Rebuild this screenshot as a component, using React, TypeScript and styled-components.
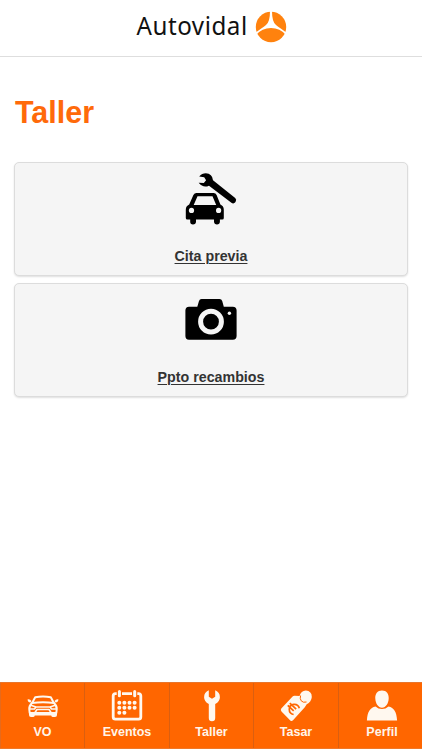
import React from 'react';
import styled, { createGlobalStyle } from 'styled-components';

const Global = createGlobalStyle`
  * { box-sizing: border-box; }
  body { margin: 0; background: #fff; font-family: "Liberation Sans", Arial, sans-serif; }
`;

const Screen = styled.div`
  height: 750px;
  display: flex;
  flex-direction: column;
  background: #fff;
  overflow: hidden;
`;

const Header = styled.header`
  height: 57px;
  flex: none;
  display: flex;
  justify-content: center;
  border-bottom: 1px solid #dedede;
`;

const Logo = styled.svg`
  width: 160px;
  height: 50px;
  display: block;
`;

const Main = styled.main`
  flex: 1;
  padding: 0 14px;
`;

const Title = styled.h1`
  margin: 38px 0 32px 1px;
  height: 35px;
  line-height: 35px;
  font-size: 30.5px;
  color: #ff6a0a;
`;

const Card = styled.a`
  height: 114px;
  margin-bottom: 7px;
  padding-top: 10px;
  display: flex;
  flex-direction: column;
  align-items: center;
  background: #f5f5f5;
  border: 1px solid #dcdcdc;
  border-radius: 5px;
  box-shadow: 0 1px 2px rgba(0, 0, 0, 0.13);
`;

const CardIcon = styled.svg`
  width: 52px;
  height: 52px;
  display: block;
  flex: none;
`;

const CardLabel = styled.span`
  margin-top: 22px;
  font-size: 14.25px;
  line-height: 18px;
  font-weight: bold;
  color: #333;
  text-decoration: underline;
  text-decoration-thickness: 1px;
  text-underline-offset: 2px;
`;

const TabBar = styled.nav`
  height: 67px;
  flex: none;
  margin-bottom: 1px;
  display: grid;
  grid-template-columns: 85px 85px 84px 85px 83px;
  background: #ff6600;
  border-top: 1px solid #e8752b;
  border-bottom: 1px solid #f07828;
`;

const Tab = styled.a`
  display: flex;
  flex-direction: column;
  align-items: center;
  padding-top: 6px;
  border-right: 1px solid #da5f10;
  &:first-child { border-left: 1px solid #e66a1c; }
  &:last-child { border-right: 0; padding-left: 3px; }
`;

const TabIcon = styled.svg`
  width: 34px;
  height: 34px;
  display: block;
`;

const TabLabel = styled.span`
  margin-top: 1px;
  font-size: 12.5px;
  line-height: 16px;
  font-weight: bold;
  color: #fff5ea;
`;

const Brand = () => (
  <Logo viewBox="131 0 160 50" role="img" aria-label="Autovidal">
    <text transform="translate(136.5 34.8) scale(.93 1)" fontFamily='"Noto Sans", sans-serif' fontSize="26" textLength="119" fill="#111">Autovidal</text>
    <circle cx="271" cy="27" r="15.2" fill="#ff820e" />
    <path d="M270 11h2Q272 22 276 25T287 33L286 35Q280 28 271 28T256 35L255 33Q262 28 266 25T270 11Z" fill="#fff" />
  </Logo>
);

const CarService = () => (
  <CardIcon viewBox="0 0 52 52">
    <path d="M14.2 3.6Q17 .3 20.8.3Q27.3.6 28 7.2L50.2 25.1Q52 26.8 50.5 29Q48.8 31.3 46.4 29.8L24 12.7Q18.2 15.5 13.7 9.8L18.8 10.1L21.1 7.2L19.2 4.2Z" />
    <path fillRule="evenodd" d="M11.5 19.9H28.5Q30.8 19.9 31.6 22L35.4 31.5Q38.8 33 38.8 36.8V45Q38.8 46.5 37.3 46.5H34.9V48.8Q34.7 51.4 32 51.4T29 48.8V46.5H11V48.8Q10.8 51.4 8 51.4T5.2 48.8V46.5H2.3Q.8 46.5.8 45V36.8Q.8 33 4.2 31.5L8.4 22Q9.4 19.9 11.5 19.9ZM12.5 23.2L8.7 32H31.2L27.5 23.2Z" />
    <circle cx="6.5" cy="37.4" r="2.6" fill="#f5f5f5" />
    <circle cx="33.6" cy="37.4" r="2.6" fill="#f5f5f5" />
  </CardIcon>
);

const Camera = () => (
  <CardIcon viewBox="0 -5 52 52">
    <path d="M4 7.7H12.3L14 2Q14.6 0 16.5 0H34.5Q36.6 0 37.2 2L38.8 7.7H47.8Q51.6 7.7 51.6 11.5V37Q51.6 40.7 47.8 40.7H4Q.4 40.7.4 37V11.5Q.4 7.7 4 7.7Z" />
    <circle cx="26" cy="22.7" r="10.4" fill="none" stroke="#f5f5f5" strokeWidth="5" />
    <circle cx="44.4" cy="14.3" r="1.7" fill="#f5f5f5" />
  </CardIcon>
);

const cream = '#fff8ef';

const Car = () => (
  <TabIcon viewBox="0 0 34 34">
    <g fill="none" stroke={cream} strokeWidth="2" strokeLinejoin="round">
      <path d="M6 14.3L9.2 8.2Q17 6.8 24.8 8.2L28 14.3" />
      <path d="M6 14Q17 12.6 28 14Q31.2 17 30.7 20.5L30.3 24H3.7L3.3 20.5Q2.8 17 6 14Z" />
      <path d="M4 16L10 18L8.5 20H3.5M30 16L24 18L25.5 20H30.5M10 18H24M9 23.5L11 20.5H23L25 23.5" strokeWidth="1.6" />
    </g>
    <path d="M1.5 10.5Q3.7 9.7 5.5 12L4.5 13.4Q2 13.6 1.5 10.5ZM32.5 10.5Q30.3 9.7 28.5 12L29.5 13.4Q32 13.6 32.5 10.5ZM3 23H9L9.4 24.5H24.6L25 23H31V26Q31 28 29 28H27Q25.5 28 25.2 26.5H8.8Q8.5 28 7 28H5Q3 28 3 26Z" fill={cream} />
  </TabIcon>
);

const Calendar = () => (
  <TabIcon viewBox="0 0 34 34">
    <path d="M6.7 4.6H5.4Q3.2 4.6 3.2 6.8V28Q3.2 30.2 5.4 30.2H28.6Q30.8 30.2 30.8 28V6.8Q30.8 4.6 28.6 4.6H27.3M12 4.6H22" fill="none" stroke={cream} strokeWidth="2.8" />
    <path d="M9.4 2.6V6.7M24.7 2.6V6.7" stroke={cream} strokeWidth="3" strokeLinecap="round" />
    <g fill={cream}>
      {[14, 19, 24].map((y, row) =>
        [9.3, 14.4, 19.5, 24.6].slice(0, row === 2 ? 2 : 4).map((x) => <circle key={`${x}-${y}`} cx={x} cy={y - 0.3} r="2" />)
      )}
    </g>
  </TabIcon>
);

const Wrench = () => (
  <TabIcon viewBox="0 0 34 34">
    <path d="M13.8 1.3V7.7L17 9.8L20.2 7.7V1.3Q24.9 3.2 24.9 8.2Q24.9 12.5 20.2 15V29Q20.2 32.2 17 32.2T13.8 29V15Q9.1 12.5 9.1 8.2Q9.1 3.2 13.8 1.3Z" fill={cream} />
  </TabIcon>
);

const PriceTag = () => (
  <TabIcon viewBox="0 0 34 34">
    <path d="M2.3 19.6L13.6 7.5Q14.4 6.6 15.8 6.7L20.5 7Q22 1.6 26.8 1.5Q32.9 2 32.8 8Q32.4 12.8 27.7 15.3L25.8 18.2L14 31.3Q12.7 32.7 11.3 31.5L2.5 22.5Q1.2 21 2.3 19.6Z" fill={cream} />
    <path d="M21.6 6.5Q20.6 9.7 22.2 11.8Q24 14 27.5 13" fill="none" stroke="#ff6600" strokeWidth="1" />
    <g transform="translate(13.8 19) rotate(43)" fill="none" stroke="#ff6600" strokeWidth="1.7">
      <path d="M5 -4.2A5.2 5 0 1 0 5 4.2M-5.5 -1.5H3.2M-5.5 1.5H2.6" />
    </g>
  </TabIcon>
);

const Person = () => (
  <TabIcon viewBox="0 0 34 34">
    <path d="M17 1.4C21.5 1.4 24.1 4.8 23.7 9.6C23.4 14.8 20.8 18.7 17 18.7S10.6 14.8 10.3 9.6C9.9 4.8 12.5 1.4 17 1.4ZM10.5 17.4Q13.3 20 17 20T23.5 17.4C29 18.7 31.6 22.6 32.1 31.5H1.9C2.4 22.6 5 18.7 10.5 17.4Z" fill={cream} />
  </TabIcon>
);

const cards = [
  { label: 'Cita previa', Icon: CarService },
  { label: 'Ppto recambios', Icon: Camera },
];

const tabs = [
  { label: 'VO', Icon: Car },
  { label: 'Eventos', Icon: Calendar },
  { label: 'Taller', Icon: Wrench },
  { label: 'Tasar', Icon: PriceTag },
  { label: 'Perfil', Icon: Person },
];

export default function App() {
  return (
    <Screen>
      <Global />
      <Header><Brand /></Header>
      <Main>
        <Title>Taller</Title>
        {cards.map(({ label, Icon }) => (
          <Card key={label}><Icon /><CardLabel>{label}</CardLabel></Card>
        ))}
      </Main>
      <TabBar>
        {tabs.map(({ label, Icon }) => (
          <Tab key={label}><Icon /><TabLabel>{label}</TabLabel></Tab>
        ))}
      </TabBar>
    </Screen>
  );
}
